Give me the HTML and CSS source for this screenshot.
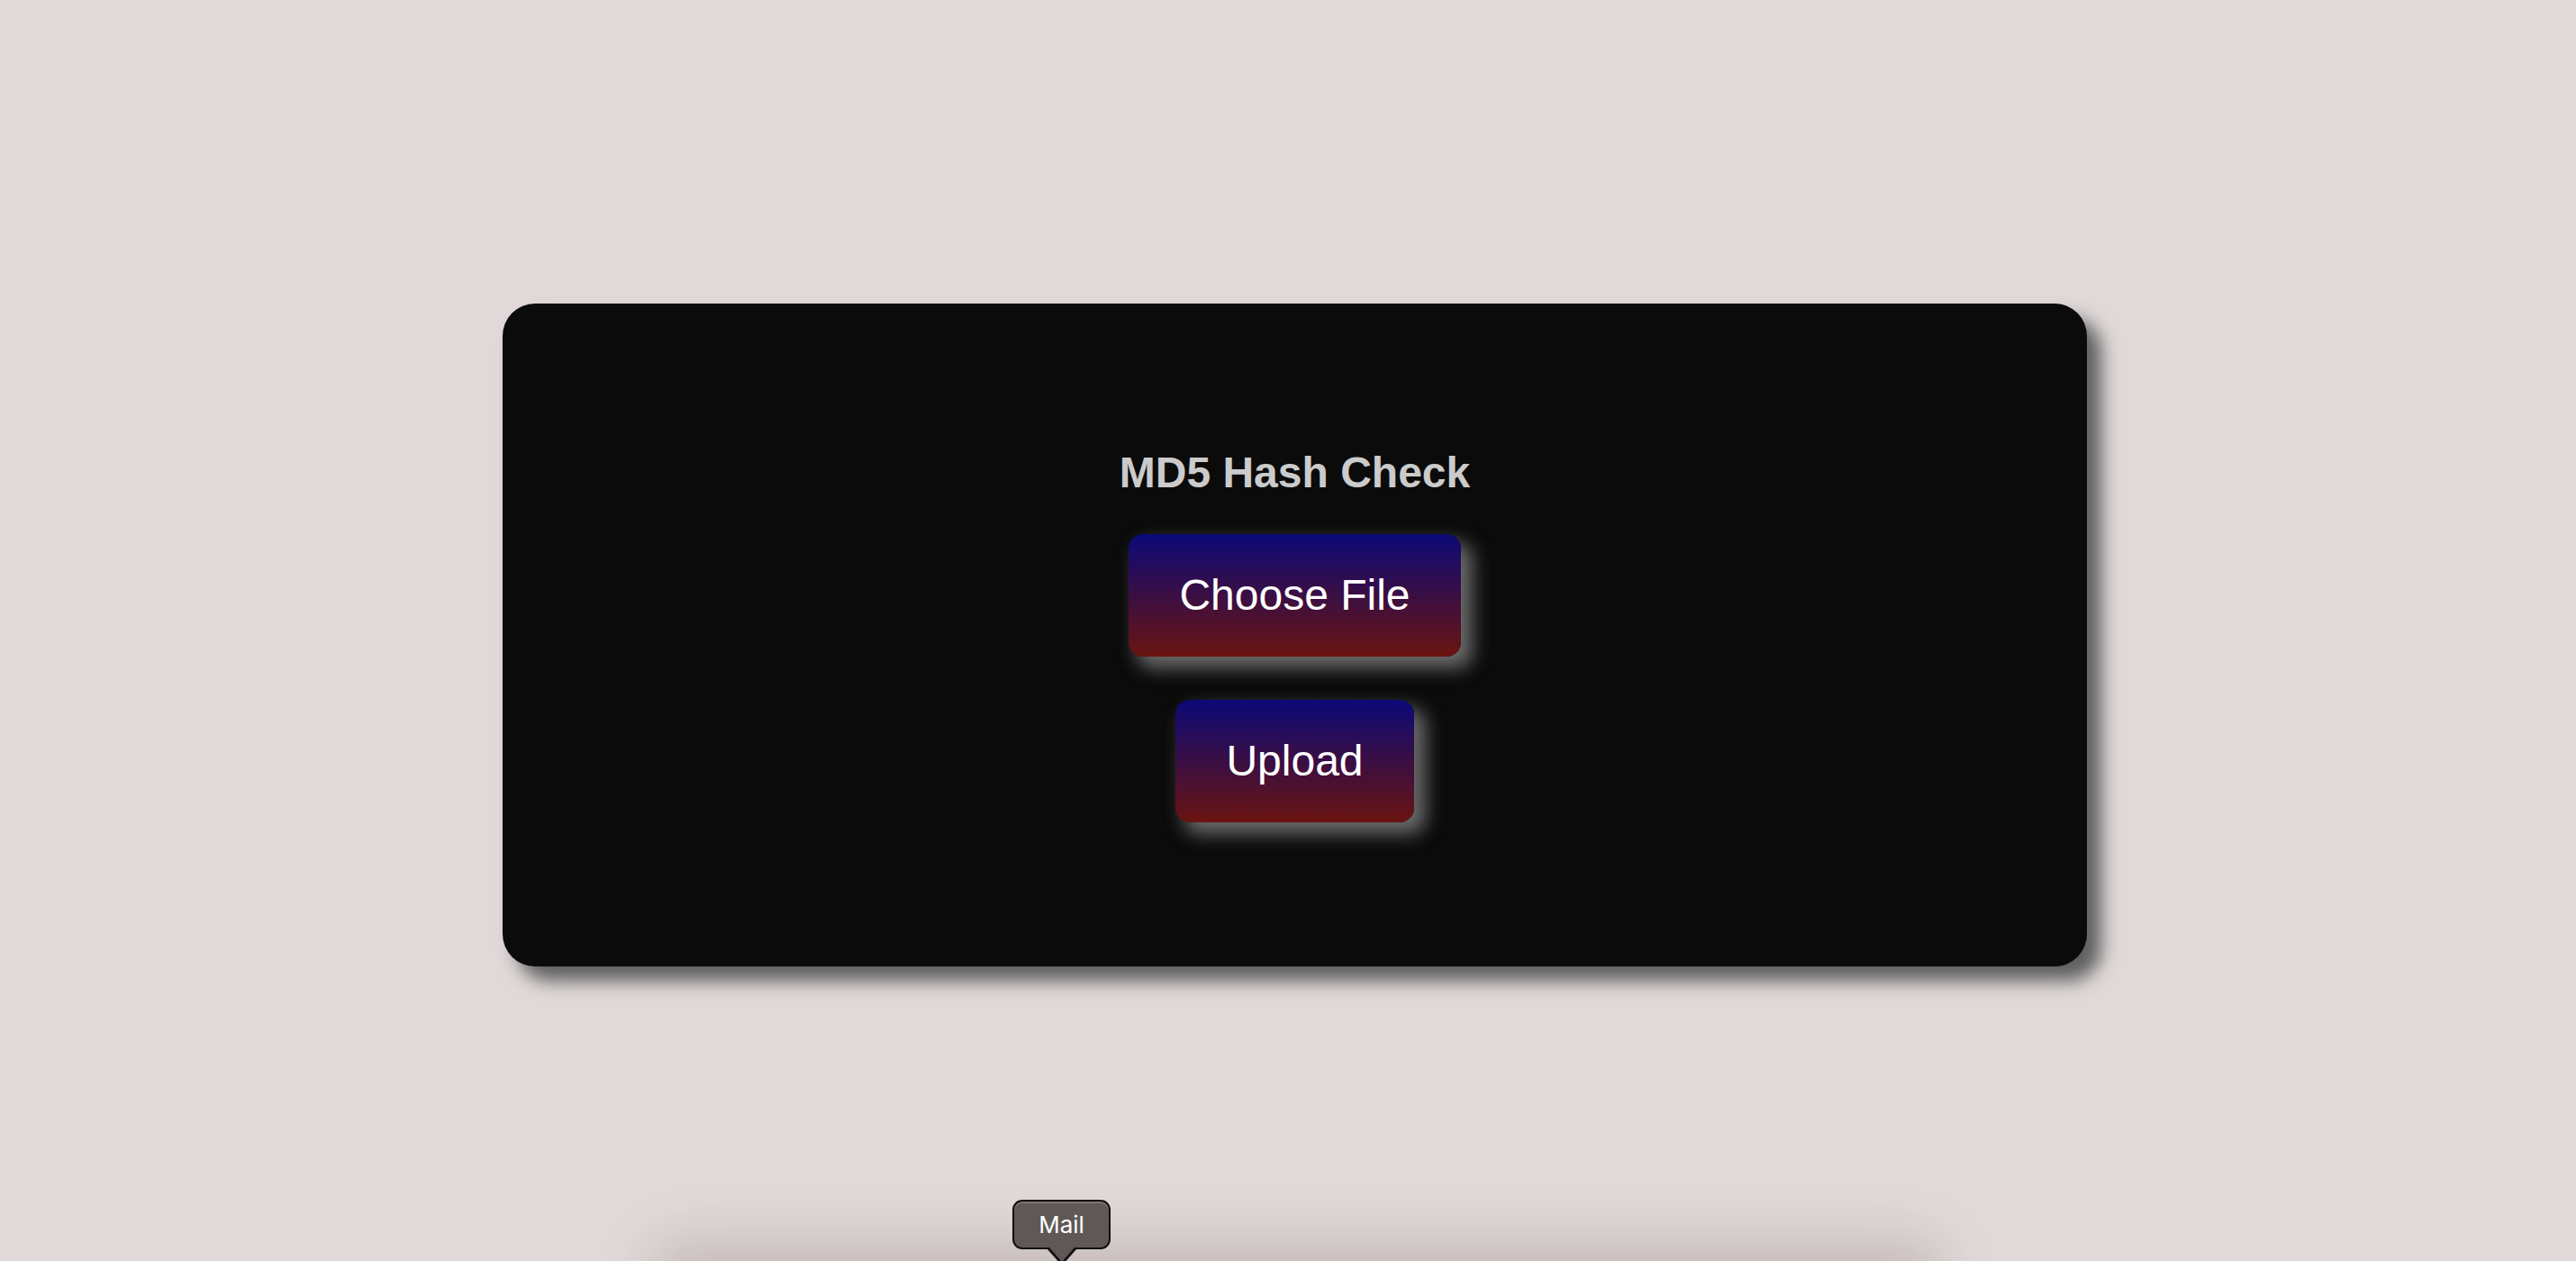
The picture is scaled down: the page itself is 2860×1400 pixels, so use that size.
FILE: index.html
```html
<!DOCTYPE html>
<html>
<head>
<meta charset="utf-8">
<title>MD5 Hash Check</title>
<link rel="stylesheet" href="styles.css">
</head>
<body>
<div class="page">
  <div class="card">
    <h2 class="title">MD5 Hash Check</h2>
    <button class="btn">Choose File</button>
    <button class="btn">Upload</button>
  </div>
</div>
<div class="dock-shadow"></div>
<div class="tooltip">Mail</div>
</body>
</html>
```

FILE: styles.css
```css
html, body {
  margin: 0;
  padding: 0;
  height: 100%;
  overflow: hidden;
  background: #e1d9d9;
}
.page {
  padding: 337px 543px 0 558px;
  font-family: "Liberation Sans", Arial, Helvetica, sans-serif;
}
.card {
  background: #0b0b0b;
  border-radius: 36px;
  height: 736px;
  box-sizing: border-box;
  padding: 160px 0 0;
  display: flex;
  flex-direction: column;
  align-items: center;
  box-shadow: 16px 16px 20px #5e5e5e;
}
.title {
  margin: 0 0 41px;
  font-size: 48px;
  line-height: 55px;
  font-weight: bold;
  color: #cbcbcb;
}
.btn {
  font-family: "Liberation Sans", Arial, Helvetica, sans-serif;
  font-size: 48px;
  line-height: 56px;
  color: #ffffff;
  border: none;
  border-radius: 16px;
  padding: 40px 56px;
  background: linear-gradient(to bottom, #0b0977, #6a1410);
  box-shadow: 11px 11px 20px 2px #6a6a6a;
  margin-bottom: 48px;
}
.dock-shadow {
  position: absolute;
  left: 720px;
  width: 1440px;
  top: 1375px;
  height: 80px;
  border-radius: 40px;
  background: rgba(60, 40, 40, 0.16);
  filter: blur(28px);
}
.tooltip {
  position: absolute;
  left: 1124px;
  top: 1332px;
  width: 109px;
  height: 55px;
  box-sizing: border-box;
  border: 2px solid #111;
  border-radius: 11px;
  background: #5f5857;
  box-shadow: inset 0 2px 0 #7a7372;
  color: #fff;
  font-family: Inter, "Liberation Sans", sans-serif;
  font-size: 26px;
  line-height: 51px;
  text-align: center;
}
.tooltip::after {
  content: "";
  position: absolute;
  left: 50%;
  top: 51px;
  margin-left: -14px;
  border-left: 14px solid transparent;
  border-right: 14px solid transparent;
  border-top: 16px solid #5f5857;
}
.tooltip::before {
  content: "";
  position: absolute;
  left: 50%;
  top: 52px;
  margin-left: -17px;
  border-left: 17px solid transparent;
  border-right: 17px solid transparent;
  border-top: 19px solid #111;
}
```
